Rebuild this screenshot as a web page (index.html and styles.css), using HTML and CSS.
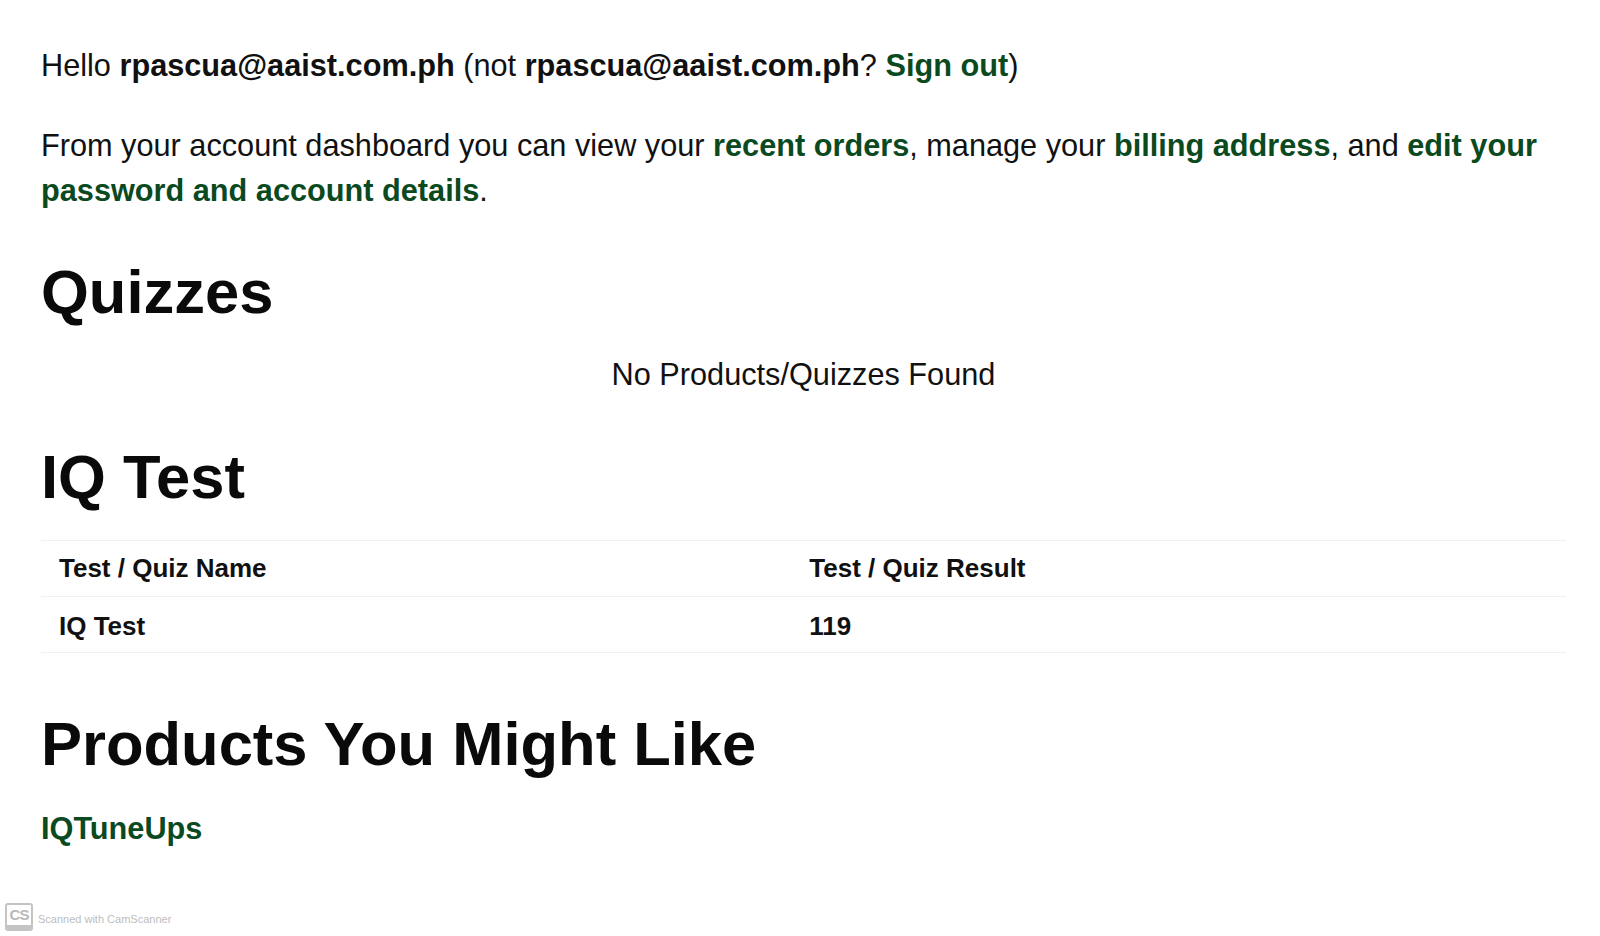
FILE: index.html
```html
<!DOCTYPE html>
<html lang="en">
<head>
  <meta charset="UTF-8" />
  <meta name="viewport" content="width=device-width, initial-scale=1.0" />
  <title>My Account</title>
  <link rel="stylesheet" href="styles.css">
</head>
<body>

  <main class="account">
    <p class="greeting">
      Hello <strong>rpascua@aaist.com.ph</strong> (not <strong>rpascua@aaist.com.ph</strong>? <a href="#">Sign out</a>)
    </p>

    <p class="intro">
      From your account dashboard you can view your <a href="#">recent orders</a>, manage your <a href="#">billing address</a>, and <a href="#">edit your password and account details</a>.
    </p>

    <h2>Quizzes</h2>
    <p class="empty">No Products/Quizzes Found</p>

    <h2>IQ Test</h2>
    <table class="results">
      <thead>
        <tr>
          <th class="col-name">Test / Quiz Name</th>
          <th>Test / Quiz Result</th>
        </tr>
      </thead>
      <tbody>
        <tr>
          <td>IQ Test</td>
          <td>119</td>
        </tr>
      </tbody>
    </table>

    <h2 class="products-title">Products You Might Like</h2>
    <p class="product"><a href="#">IQTuneUps</a></p>
  </main>

  <div class="watermark">
    <span class="cs-logo">CS</span>
    <span class="cs-text">Scanned with CamScanner</span>
  </div>

</body>
</html>
```

FILE: styles.css
```css
* {
  margin: 0;
  padding: 0;
  box-sizing: border-box;
}

body {
  font-family: 'Liberation Sans', Arial, sans-serif;
  background-color: #ffffff;
  color: #111111;
  font-size: 30.7px;
  line-height: 44px;
}

.account {
  padding: 44px 34px 0 41px;
}

a {
  color: #0b4a1f;
  font-weight: bold;
  text-decoration: none;
}

strong {
  font-weight: bold;
}

.intro {
  margin-top: 35px;
  line-height: 45px;
}

h2 {
  font-size: 61.5px;
  line-height: 72px;
  font-weight: bold;
  color: #0a0a0a;
  margin-top: 43px;
}

.empty {
  text-align: center;
  margin-top: 25px;
  margin-bottom: 44px;
}

.empty + h2 {
  margin-top: 0;
}

.results {
  width: 100%;
  border-collapse: collapse;
  margin-top: 27px;
  font-size: 26px;
  line-height: 39px;
}

.results th,
.results td {
  text-align: left;
  font-weight: bold;
  padding: 8px 18px;
  border-top: 1px solid #f0f0f0;
  border-bottom: 1px solid #f0f0f0;
}

.results td {
  padding-top: 10px;
  padding-bottom: 6px;
}

.results .col-name {
  width: 49.2%;
}

.products-title {
  margin-top: 55px;
}

.product {
  margin-top: 27px;
}

.watermark {
  position: absolute;
  left: 5px;
  top: 903px;
  display: flex;
  align-items: center;
  gap: 5px;
}

.cs-logo {
  width: 28px;
  height: 28px;
  border: 2px solid #c4c4c4;
  border-bottom-width: 6px;
  border-radius: 3px;
  color: #b8b8b8;
  font-size: 15px;
  line-height: 20px;
  font-weight: bold;
  text-align: center;
  letter-spacing: -1px;
}

.cs-text {
  font-size: 11px;
  line-height: 14px;
  color: #bdbdbd;
  margin-top: 3px;
}
```
